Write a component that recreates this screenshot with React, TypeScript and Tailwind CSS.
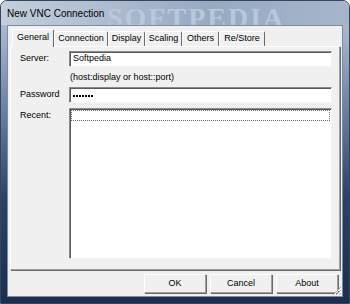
import React from 'react';

const tabs = [
  { label: 'General', w: 'w-[42px]', active: true },
  { label: 'Connection', w: 'w-[54px]' },
  { label: 'Display', w: 'w-[37px]' },
  { label: 'Scaling', w: 'w-[37px]' },
  { label: 'Others', w: 'w-[37px]' },
  { label: 'Re/Store', w: 'w-[46px]' },
];

const sunken =
  'bg-white border border-t-[#8a8a8a] border-l-[#8a8a8a] border-b-[#f4f4f4] border-r-[#f4f4f4] shadow-[inset_1px_1px_0_#5a5a5a]';

const Field: React.FC<{ label: string; children?: React.ReactNode }> = ({ label, children }) => (
  <div className="flex items-center h-[16px]">
    <span className="w-[49px] shrink-0">{label}</span>
    <div className={`w-[263px] h-[16px] flex items-center pl-[3px] ${sunken}`}>{children}</div>
  </div>
);

const Btn: React.FC<{ label: string }> = ({ label }) => (
  <button className="w-[62px] h-[19px] flex items-center justify-center bg-[#f0f0f0] border border-t-white border-l-white border-r-[#a0a0a0] border-b-[#a0a0a0] shadow-[1px_1px_0_#696969]">
    {label}
  </button>
);

export default function App() {
  return (
    <div className="w-[350px] h-[304px] flex flex-col overflow-hidden rounded-t-[7px] border border-[#33465f] bg-[linear-gradient(180deg,#b7c4d6_0%,#a3b3ca_12%,#6d83a4_35%,#2a4266_65%,#1b2e4d_100%)] font-['Liberation_Sans',Arial,sans-serif] text-[9px] text-black">
      {/* title bar */}
      <div className="relative h-[24px] shrink-0 flex items-center px-[6px] bg-[linear-gradient(90deg,#c4cedc_0%,#aebcd0_30%,#98aac3_60%,#a6b5ca_100%)]">
        <span className="absolute left-[106px] top-[-4px] font-['Liberation_Serif',serif] font-bold text-[28px] tracking-[2px] text-[#bccadc] opacity-90 select-none">
          SOFTPEDIA
        </span>
        <span className="relative text-[10px] text-black">New VNC Connection</span>
      </div>

      {/* client area */}
      <div className="flex-1 px-[6px] pb-[6px] flex">
        <div className="relative flex-1 flex flex-col bg-[#f0f0f0] border border-[#7d8ca3] pt-[2px] px-[2px]">
          {/* tab strip */}
          <div className="flex items-end h-[18px] pl-[2px]">
            {tabs.map((t) => (
              <div
                key={t.label}
                className={`${t.w} flex items-center justify-center border-l border-t border-white border-r border-r-[#696969] rounded-t-[2px] ${
                  t.active ? 'h-[18px] bg-[#f0f0f0] relative z-10 -mb-px pb-[2px]' : 'h-[15px]'
                }`}
              >
                {t.label}
              </div>
            ))}
          </div>

          {/* tab panel */}
          <div className="h-[224px] w-[330px] flex flex-col bg-[#f0f0f0] border border-t-white border-l-white border-r-[#a0a0a0] border-b-[#a0a0a0] shadow-[1px_1px_0_#696969] pt-[4px] pl-[9px]">
            <Field label="Server:">
              <span>Softpedia</span>
            </Field>
            <div className="mt-[5px] h-[11px] pl-[50px] flex items-center">(host:display or host::port)</div>
            <div className="mt-[4px]">
              <Field label="Password">
                <span className="flex gap-[1px] pt-[1px]">
                  {Array.from({ length: 7 }).map((_, i) => (
                    <span key={i} className="w-[2px] h-[2px] bg-black" />
                  ))}
                </span>
              </Field>
            </div>
            <div className="mt-[5px] flex items-start">
              <span className="w-[49px] shrink-0 pt-[1px]">Recent:</span>
              <div className={`w-[263px] h-[151px] p-[1px] ${sunken}`}>
                <div className="h-[11px] border border-dotted border-[#6a6a6a] bg-white" />
              </div>
            </div>
          </div>

          {/* buttons */}
          <div className="flex justify-end gap-[4px] mt-[4px] pr-[2px]">
            <Btn label="OK" />
            <Btn label="Cancel" />
            <Btn label="About" />
          </div>

          {/* size grip */}
          <svg className="absolute right-0 bottom-0" width="11" height="11" viewBox="0 0 11 11">
            <g stroke="#a0a0a0" strokeWidth="1">
              <line x1="10" y1="2" x2="2" y2="10" />
              <line x1="10" y1="5" x2="5" y2="10" />
              <line x1="10" y1="8" x2="8" y2="10" />
            </g>
            <g stroke="#ffffff" strokeWidth="1">
              <line x1="10" y1="3" x2="3" y2="10" />
              <line x1="10" y1="6" x2="6" y2="10" />
              <line x1="10" y1="9" x2="9" y2="10" />
            </g>
          </svg>
        </div>
      </div>
    </div>
  );
}
